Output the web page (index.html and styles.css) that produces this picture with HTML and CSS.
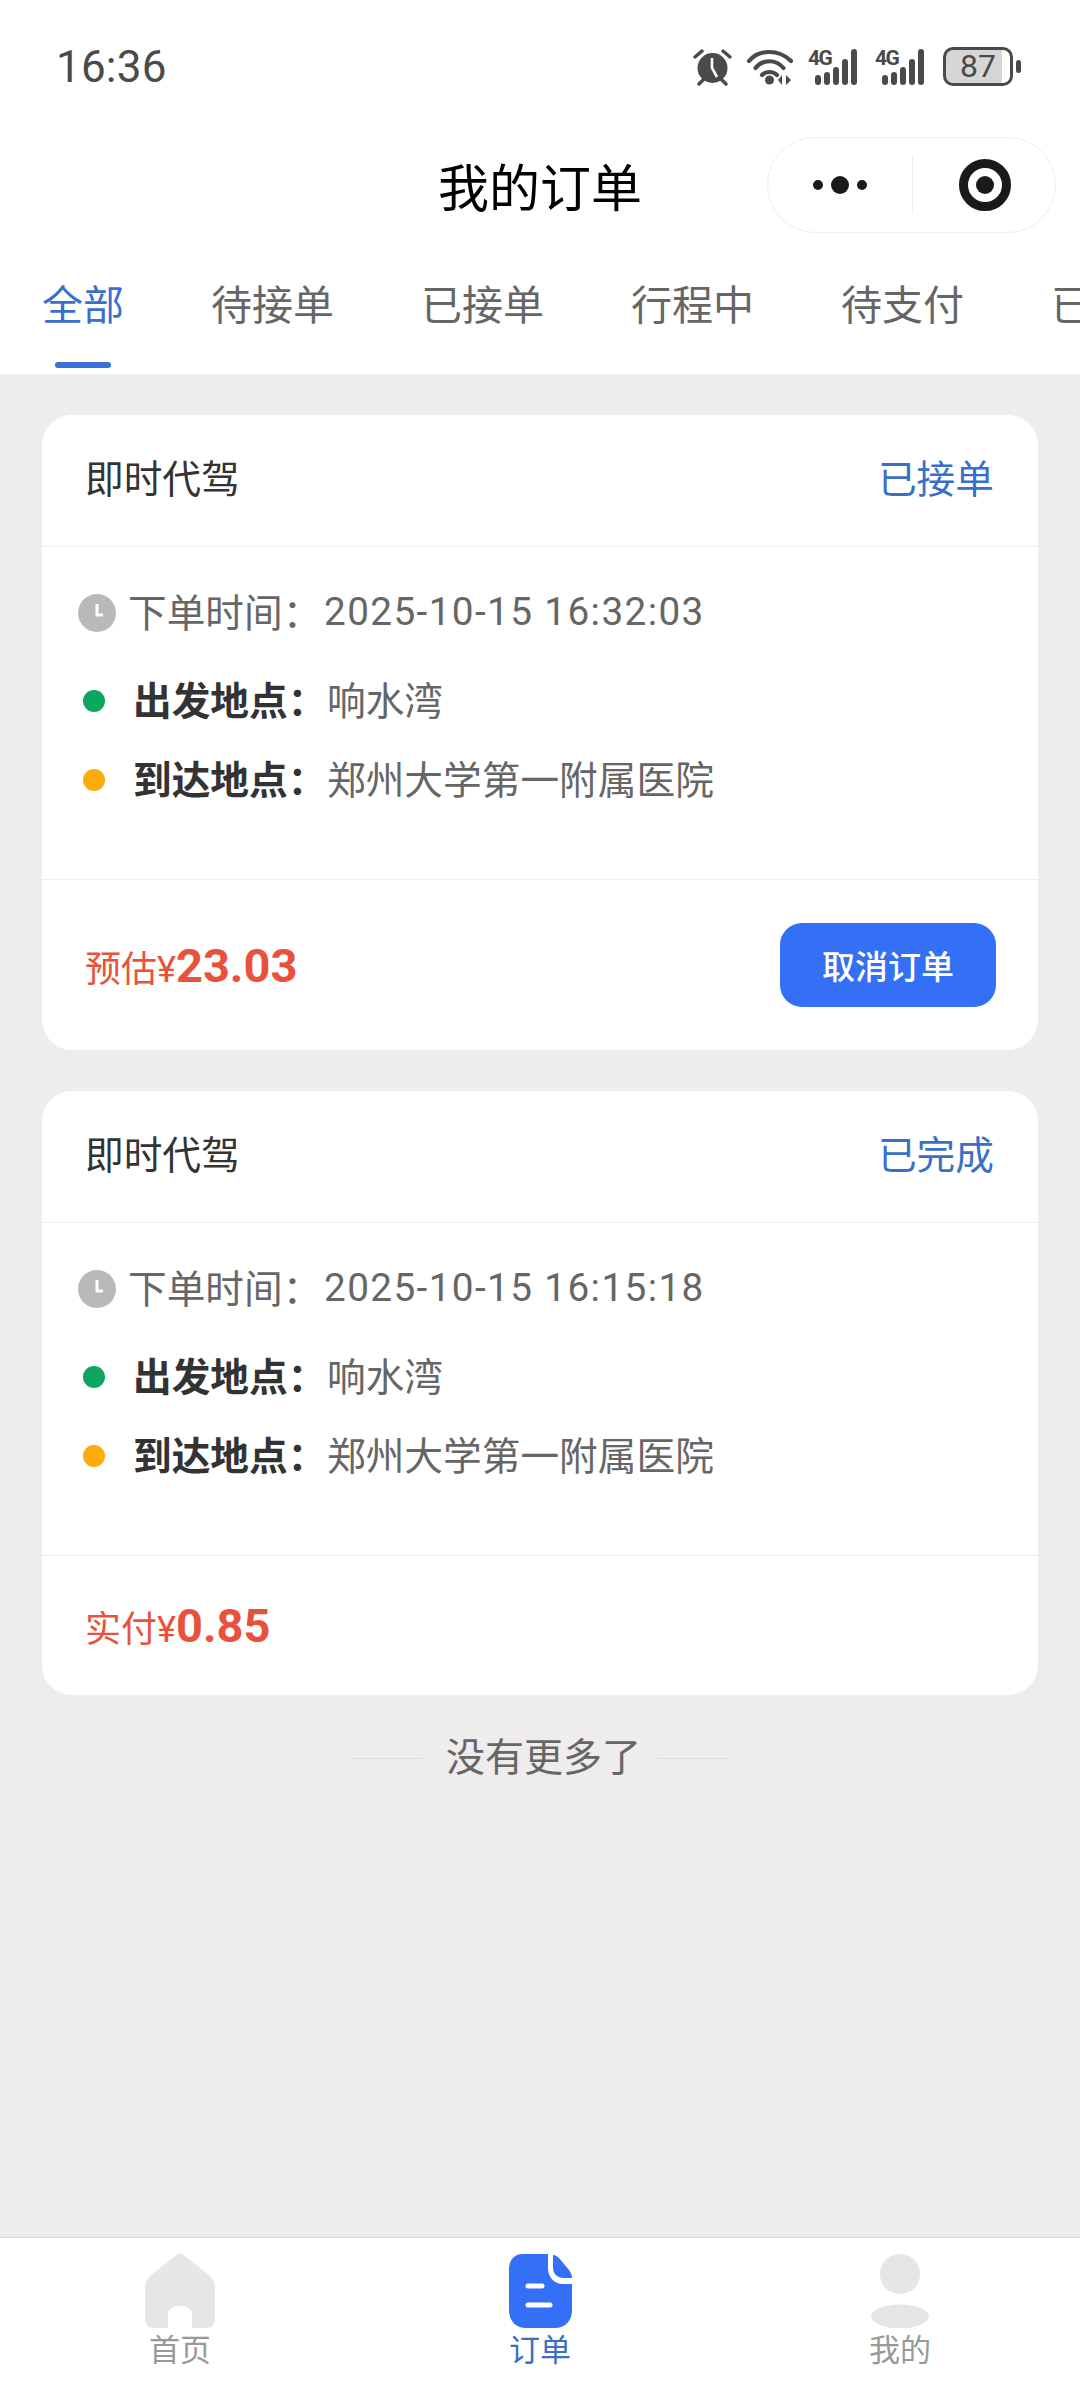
FILE: index.html
```html
<!DOCTYPE html>
<html lang="zh-CN">
<head>
  <meta charset="UTF-8">
  <meta name="viewport" content="width=device-width, initial-scale=1.0">
  <title>我的订单</title>
  <link rel="stylesheet" href="styles.css">
</head>
<body>
  <div class="page">
    <header class="top">
      <div class="status">
        <span class="status-time">16:36</span>
        <div class="status-icons">
          <svg class="ic-alarm" width="39" height="38" viewBox="0 0 39 38">
            <circle cx="19.5" cy="20" r="15" fill="#4a4a4a"/>
            <path d="M19 10v10l5 9" fill="none" stroke="#fff" stroke-width="2.6"/>
            <path d="M2 9l7-6M37 9l-7-6M6 36l5-5M33 36l-5-5" fill="none" stroke="#4a4a4a" stroke-width="3.4" stroke-linecap="round"/>
          </svg>
          <svg class="ic-wifi" width="46" height="38" viewBox="0 0 46 38">
            <path d="M2 13C12 1 32 1 44 13M8.500 20C16 11 29 11 36.500 20M15 27c4-4 11-4 15 0" fill="none" stroke="#4a4a4a" stroke-width="4.200" stroke-linecap="round"/>
            <circle cx="22.500" cy="32" r="4.500" fill="#4a4a4a"/>
            <path d="M35 27v10l-4-5zM39 27v10l5-5z" fill="#4a4a4a"/>
          </svg>
          <div class="signal">
            <span class="signal-type">4G</span>
            <span class="bar b1"></span><span class="bar b2"></span><span class="bar b3"></span><span class="bar b4"></span><span class="bar b5"></span>
          </div>
          <div class="signal">
            <span class="signal-type">4G</span>
            <span class="bar b1"></span><span class="bar b2"></span><span class="bar b3"></span><span class="bar b4"></span><span class="bar b5"></span>
          </div>
          <div class="battery">
            <div class="battery-body"><span class="battery-num">87</span></div>
            <span class="battery-nub"></span>
          </div>
        </div>
      </div>

      <div class="nav">
        <h1 class="nav-title">我的订单</h1>
        <div class="capsule">
          <div class="capsule-dots"><i></i><i class="big"></i><i></i></div>
          <span class="capsule-line"></span>
          <div class="capsule-target"><i></i></div>
        </div>
      </div>

      <nav class="tabs">
        <a class="tab active">全部</a>
        <a class="tab">待接单</a>
        <a class="tab">已接单</a>
        <a class="tab">行程中</a>
        <a class="tab">待支付</a>
        <a class="tab">已完成</a>
      </nav>
    </header>

    <main class="list">
      <section class="card">
        <div class="card-head">
          <span>即时代驾</span>
          <span class="state">已接单</span>
        </div>
        <div class="card-body">
          <div class="row-time">
            <svg class="clock" width="38" height="38" viewBox="0 0 38 38">
              <circle cx="19" cy="19" r="19" fill="#b9b9b9"/>
              <path d="M19 10v11h6" fill="none" stroke="#fff" stroke-width="3"/>
            </svg>
            <span class="time-label">下单时间：</span>
            <span class="time-value">2025-10-15 16:32:03</span>
          </div>
          <div class="row-place">
            <span class="dot green"></span>
            <b class="place-label">出发地点：</b>
            <span class="place-value">响水湾</span>
          </div>
          <div class="row-place">
            <span class="dot orange"></span>
            <b class="place-label">到达地点：</b>
            <span class="place-value">郑州大学第一附属医院</span>
          </div>
        </div>
        <div class="card-foot">
          <div class="price"><span class="price-label">预估¥</span><b class="price-num">23.03</b></div>
          <button class="btn">取消订单</button>
        </div>
      </section>

      <section class="card">
        <div class="card-head">
          <span>即时代驾</span>
          <span class="state">已完成</span>
        </div>
        <div class="card-body">
          <div class="row-time">
            <svg class="clock" width="38" height="38" viewBox="0 0 38 38">
              <circle cx="19" cy="19" r="19" fill="#b9b9b9"/>
              <path d="M19 10v11h6" fill="none" stroke="#fff" stroke-width="3"/>
            </svg>
            <span class="time-label">下单时间：</span>
            <span class="time-value">2025-10-15 16:15:18</span>
          </div>
          <div class="row-place">
            <span class="dot green"></span>
            <b class="place-label">出发地点：</b>
            <span class="place-value">响水湾</span>
          </div>
          <div class="row-place">
            <span class="dot orange"></span>
            <b class="place-label">到达地点：</b>
            <span class="place-value">郑州大学第一附属医院</span>
          </div>
        </div>
        <div class="card-foot short">
          <div class="price"><span class="price-label">实付¥</span><b class="price-num">0.85</b></div>
        </div>
      </section>

      <div class="no-more">
        <span class="no-more-line"></span>
        <span class="no-more-text">没有更多了</span>
        <span class="no-more-line"></span>
      </div>
    </main>

    <footer class="tabbar">
      <a class="tabbar-item">
        <svg width="70" height="74" viewBox="0 0 70 74">
          <path d="M35 0C38 0 41 2 44 5L66 23C69 26 70 29 70 33V64C70 70 67 74 62 74H47V60C47 55 42 52 35 52S23 55 23 60V74H8C3 74 0 70 0 64V33C0 29 1 26 4 23L26 5C29 2 32 0 35 0Z" fill="#e6e6e6"/>
        </svg>
        <span>首页</span>
      </a>
      <a class="tabbar-item active">
        <svg width="63" height="74" viewBox="0 0 63 74">
          <path d="M14 0H39V14C39 23 45 30 54 30H63V56C63 67 56 74 46 74H17C7 74 0 67 0 56V16C0 6 5 0 14 0Z" fill="#3370f5"/>
          <path d="M44 1C46 1 48 2 50 4L60 16C62 19 63 21 63 24H55C48 24 44 20 44 13Z" fill="#3370f5"/>
          <path d="M19 32H33M19 51H41" fill="none" stroke="#fff" stroke-width="5" stroke-linecap="round"/>
        </svg>
        <span>订单</span>
      </a>
      <a class="tabbar-item">
        <svg width="58" height="74" viewBox="0 0 58 74">
          <ellipse cx="29" cy="20" rx="20" ry="20" fill="#e6e6e6"/>
          <ellipse cx="29" cy="62.500" rx="29" ry="12" fill="#e6e6e6"/>
        </svg>
        <span>我的</span>
      </a>
    </footer>
  </div>
</body>
</html>
```

FILE: styles.css
```css
* {
  box-sizing: border-box;
}

body {
  margin: 0;
  background-color: #eeecec;
  font-family: Roboto, "Noto Sans CJK SC", sans-serif;
  color: #555;
}

.page {
  display: flex;
  flex-direction: column;
  height: 100vh;
  overflow: hidden;
}

.top {
  background: #fff;
  height: 374px;
  overflow: hidden;
}

/* status bar */
.status {
  height: 137px;
  padding: 47px 59px 0 56px;
  display: flex;
  justify-content: space-between;
  align-items: flex-start;
}

.status-time {
  font-size: 44px;
  line-height: 40px;
  letter-spacing: 0.200px;
  color: #4a4a4a;
}

.status-icons {
  display: flex;
  align-items: center;
  height: 39px;
}

.ic-wifi {
  margin-left: 15px;
}

.signal {
  position: relative;
  display: flex;
  align-items: flex-end;
  gap: 3px;
  width: 53px;
  height: 36px;
  margin-left: 15px;
  padding-left: 7px;
}

.signal + .signal {
  margin-left: 14px;
}

.signal-type {
  position: absolute;
  left: 0;
  top: -2px;
  font-size: 21px;
  line-height: 22px;
  font-weight: 700;
  letter-spacing: -1.500px;
  color: #4a4a4a;
}

.bar {
  width: 6px;
  border-radius: 3px;
  background: #4a4a4a;
}

.b1 { height: 10px; }
.b2 { height: 13px; }
.b3 { height: 18px; }
.b4 { height: 26px; }
.b5 { height: 36px; }

.battery {
  display: flex;
  align-items: center;
  margin-left: 15px;
}

.battery-body {
  width: 70px;
  height: 39px;
  border: 3px solid #4a4a4a;
  border-radius: 10px;
  background: linear-gradient(to right, #d6d6d6 88%, #fff 88%);
  text-align: center;
}

.battery-num {
  font-size: 32px;
  line-height: 33px;
  color: #4a4a4a;
  display: block;
}

.battery-nub {
  width: 5px;
  height: 13px;
  margin-left: 3px;
  border-radius: 3px;
  background: #4a4a4a;
}

/* title row */
.nav {
  height: 96px;
  display: grid;
  grid-template-columns: 1fr auto 1fr;
  align-items: center;
}

.nav-title {
  grid-column: 2;
  margin: 0;
  font-size: 51px;
  font-weight: 400;
  color: #000;
}

.capsule {
  grid-column: 3;
  justify-self: end;
  margin-right: 24px;
  width: 289px;
  height: 96px;
  border: 1px solid #eeeeee;
  border-radius: 48px;
  display: flex;
  align-items: center;
}

.capsule-dots {
  width: 144px;
  display: flex;
  justify-content: center;
  align-items: center;
  gap: 8px;
}

.capsule-dots i {
  width: 10px;
  height: 10px;
  border-radius: 50%;
  background: #1a1a1a;
}

.capsule-dots i.big {
  width: 18px;
  height: 18px;
}

.capsule-line {
  width: 1px;
  height: 58px;
  background: #eeeeee;
}

.capsule-target {
  width: 52px;
  height: 52px;
  margin-left: 46px;
  border: 9px solid #1a1a1a;
  border-radius: 50%;
  display: flex;
  align-items: center;
  justify-content: center;
}

.capsule-target i {
  width: 18px;
  height: 18px;
  border-radius: 50%;
  background: #1a1a1a;
}

/* tabs */
.tabs {
  display: flex;
  gap: 87px;
  padding: 48px 0 0 42px;
  white-space: nowrap;
}

.tab {
  position: relative;
  font-size: 41px;
  line-height: 50px;
  flex-shrink: 0;
  color: #666;
}

.tab.active {
  color: #3a6fd0;
}

.tab.active::after {
  content: "";
  position: absolute;
  left: 13px;
  right: 13px;
  top: 81px;
  height: 6px;
  border-radius: 3px;
  background: #3a6fd8;
}

/* order list */
.list {
  flex: 1;
  padding: 41px 42px 0;
  display: flex;
  flex-direction: column;
  gap: 41px;
}

.card {
  background: #fff;
  border-radius: 30px;
  font-size: 38.700px;
}

.card-head {
  height: 132px;
  padding: 0 44px 10px 43px;
  display: flex;
  justify-content: space-between;
  align-items: center;
  border-bottom: 1px solid #eeeeee;
  color: #333;
}

.state {
  color: #3a6fc8;
}

.card-body {
  height: 333px;
  padding: 40px 0 0 36px;
  border-bottom: 1px solid #eeeeee;
  color: #666;
}

.row-time {
  display: flex;
  align-items: center;
  height: 52px;
  margin-bottom: 36px;
}

.clock {
  margin-right: 12px;
}

.time-label {
  width: 196px;
  padding-bottom: 6px;
}

.time-value {
  letter-spacing: 1.400px;
  padding-bottom: 3px;
}

.row-place {
  display: flex;
  align-items: center;
  height: 52px;
  margin-bottom: 27px;
  padding-left: 5px;
}

.dot {
  width: 22px;
  height: 22px;
  border-radius: 50%;
  margin-right: 28px;
}

.green {
  background: #0ca75f;
}

.orange {
  background: #fcab0a;
}

.place-label {
  width: 194px;
  padding-bottom: 6px;
  font-weight: 700;
  color: #333;
}

.place-value {
  padding-bottom: 6px;
}

.card-foot {
  height: 170px;
  padding: 0 42px 0 43px;
  display: flex;
  justify-content: space-between;
  align-items: center;
}

.card-foot.short {
  height: 139px;
}

.price {
  color: #e8523c;
  display: flex;
  align-items: baseline;
}

.price-label {
  font-size: 36px;
}

.price-num {
  font-size: 47px;
  font-weight: 700;
}

.btn {
  width: 216px;
  height: 84px;
  border: none;
  border-radius: 22px;
  background: #3370f5;
  color: #fff;
  font-family: inherit;
  font-size: 33px;
  font-weight: 500;
}

.no-more {
  display: flex;
  justify-content: center;
  align-items: center;
  gap: 17px;
  margin-top: -4px;
  font-size: 39px;
  line-height: 52px;
  color: #666;
}

.no-more-text {
  margin-left: 7px;
}

.no-more-line {
  width: 70px;
  height: 1px;
  background: #dcdcdc;
}

/* bottom tab bar */
.tabbar {
  height: 151px;
  padding-top: 16px;
  background: #fff;
  border-top: 1px solid #dcdcdc;
  display: grid;
  grid-template-columns: repeat(3, 1fr);
}

.tabbar-item {
  display: flex;
  flex-direction: column;
  align-items: center;
  gap: 6px;
  font-size: 31px;
  line-height: 34px;
  color: #999;
}

.tabbar-item svg {
  display: block;
}

.tabbar-item.active {
  color: #3a6fc8;
}
```
